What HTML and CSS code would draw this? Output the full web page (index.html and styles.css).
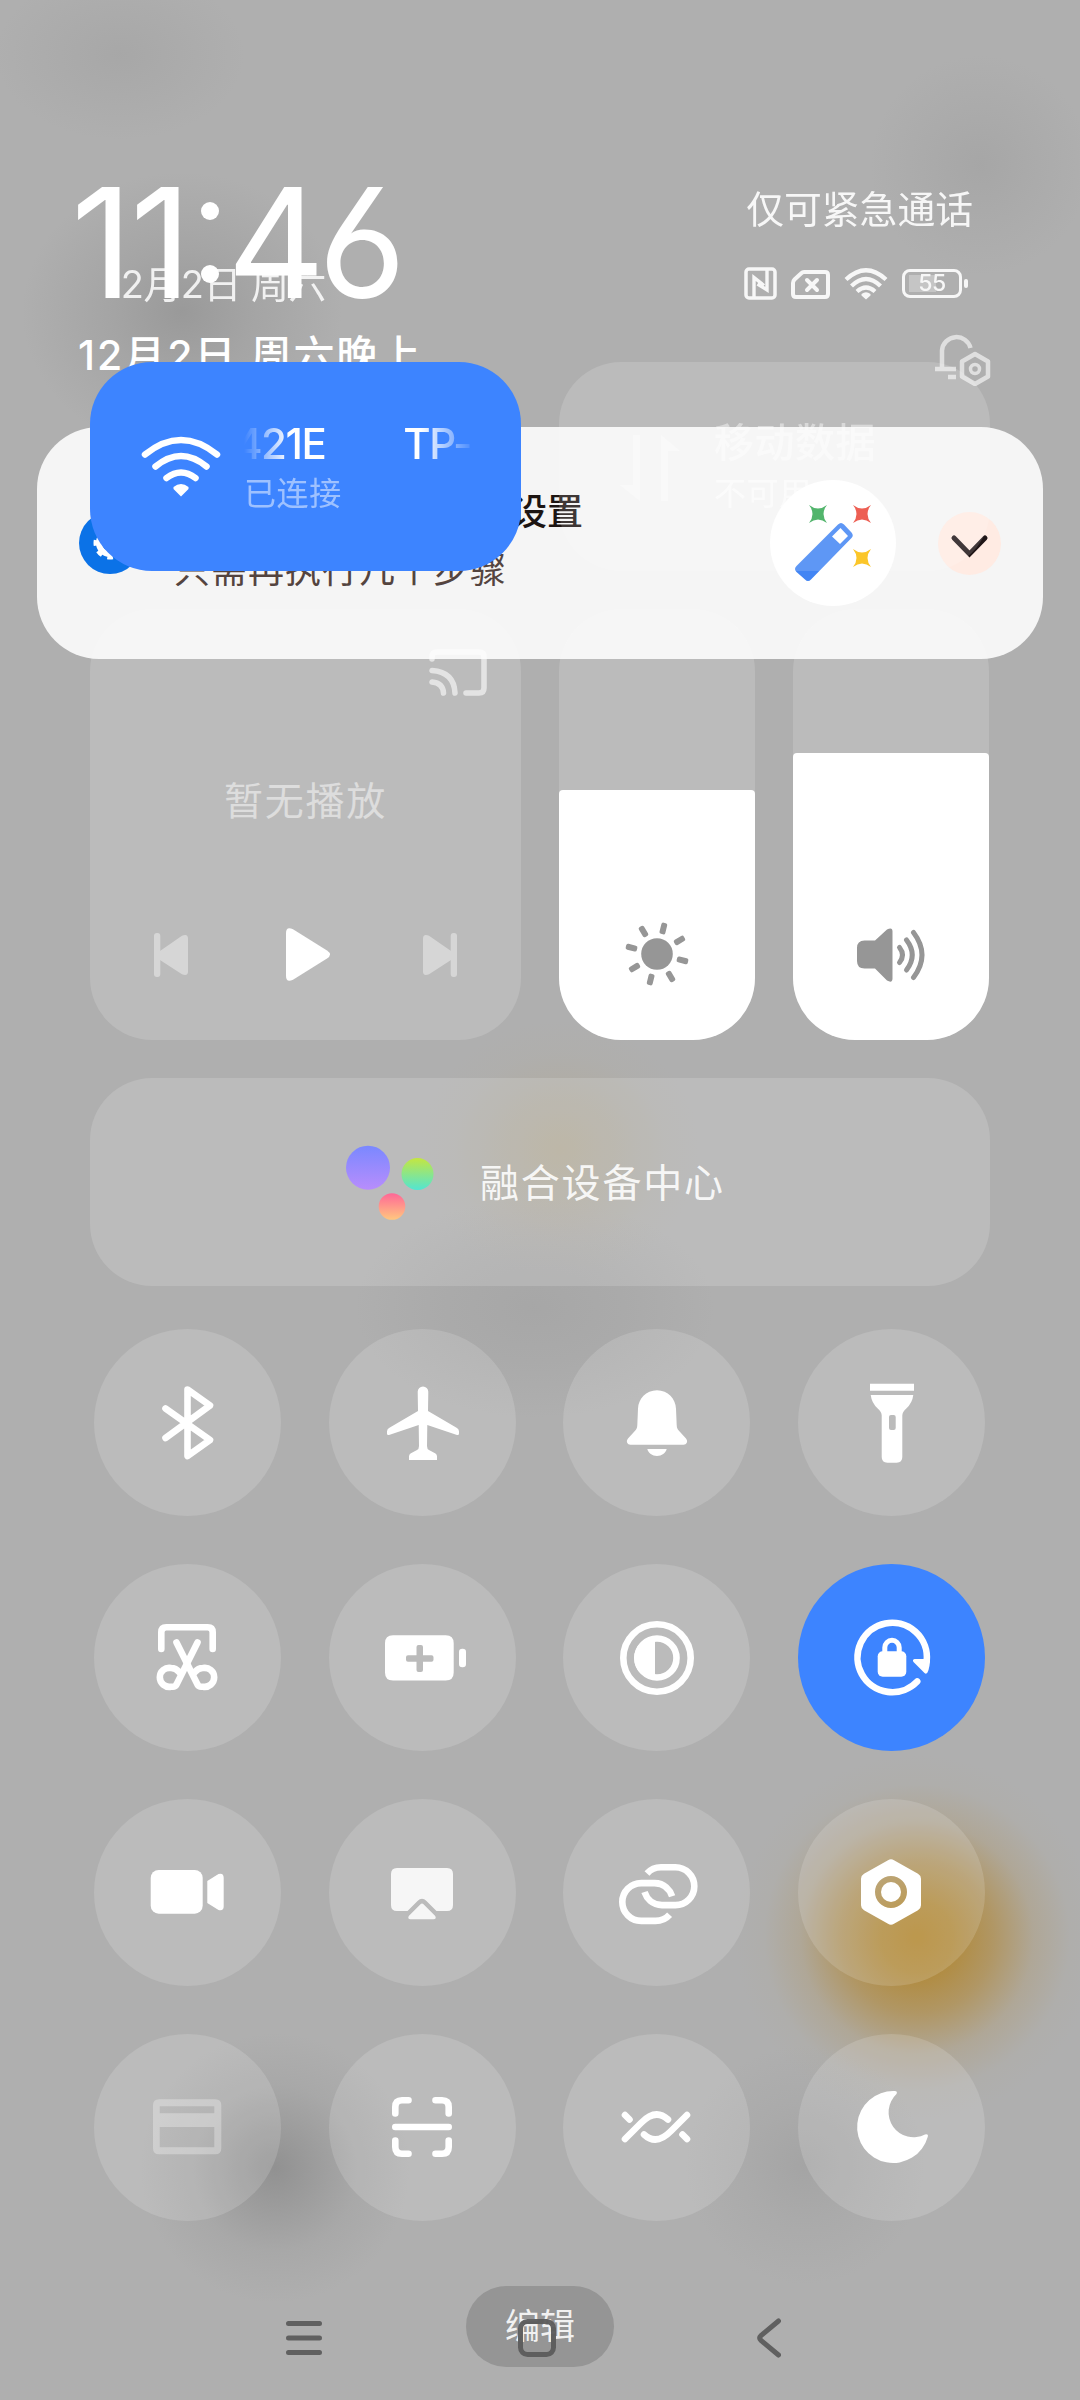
FILE: index.html
```html
<!DOCTYPE html>
<html lang="zh-CN">
<head>
<meta charset="utf-8">
<title>控制中心</title>
<link rel="stylesheet" href="styles.css">
</head>
<body>
<div class="screen">
  <section class="lock layer">
    <div class="clock"><span class="one">1</span><span class="one">1</span><span class="colon"><i></i><i></i></span><span class="four">4</span><span class="six">6</span></div>
    <div class="lock-date">12月2日 周六晚上</div>
    <article class="notice">
      <svg class="notice-app" viewBox="0 0 62 62"><circle cx="31" cy="31" r="31" fill="#0b72e7"/><circle cx="31" cy="31" r="11" fill="none" stroke="#fff" stroke-width="6"/><circle cx="31" cy="31" r="14" fill="none" stroke="#fff" stroke-width="5" stroke-dasharray="5.5 5.5" stroke-dashoffset="3"/></svg>
      <div class="notice-text"><strong>设置</strong><span>只需再执行几个步骤</span></div>
      <svg class="notice-wand" viewBox="0 0 126 126"><circle cx="63" cy="63" r="63" fill="#fff"/>
        <path d="M39 25q9 7 18 0q-7 9 0 18q-9-7-18 0q7-9 0-18z" fill="#34a853"/>
        <path d="M83 25q9 7 18 0q-7 9 0 18q-9-7-18 0q7-9 0-18z" fill="#ea4335"/>
        <path d="M83 69q9 7 18 0q-7 9 0 18q-9-7-18 0q7-9 0-18z" fill="#fbbc04"/>
        <path d="M68 44.500q3-3 6 0l7.500 8q2.500 3 0 5.500L41 99.500q-3 3-6 0L26.500 92q-3-3 0-6z" fill="#4285f4"/>
        <path d="M70.500 48l7.500 8-8 8-8-7.500z" fill="#fff"/></svg>
      <svg class="notice-more" viewBox="0 0 63 63"><circle cx="31.500" cy="31.500" r="31.500" fill="#ffebe3"/><path d="M16 26l15.500 16L47 26" fill="none" stroke="#1f1517" stroke-width="5" stroke-linecap="round"/></svg>
    </article>
  </section>

  <section class="panel layer">
    <header class="head">
      <div class="head-date">12月2日 周六</div>
      <div class="head-right">
        <div class="carrier">仅可紧急通话</div>
        <div class="status">
          <svg width="33" height="33" viewBox="0 0 33 33" fill="none" stroke="#fff"><rect x="2" y="2" width="29" height="29" rx="3" stroke-width="3.500"/><path d="M10 30V10.500l10 8M23 3v20L13.500 17" stroke-width="3.400"/></svg>
          <svg width="39" height="33" viewBox="0 0 39 33"><path d="M13 5h21q3 0 3 3v19q0 3-3 3H5q-3 0-3-3V16q0-2 1.500-3.500L10 6.500Q11.500 5 13 5z" fill="none" stroke="#fff" stroke-width="4"/><path d="M16 13l10 10M26 13L16 23" stroke="#fff" stroke-width="4" stroke-linecap="round"/></svg>
          <svg width="44" height="33" viewBox="0 0 44 33"><g fill="none" stroke="#fff" stroke-width="4.300"><path d="M2 12.500Q22-6 42 12.500"/><path d="M7.500 19Q22 5 36.500 19"/><path d="M13 24.500q9-8 18 0"/></g><path d="M17.500 27q4.500-3.500 9 0v1.500L22 32.500l-4.500-4z" fill="#fff"/></svg>
          <div class="battery"><span>55</span></div>
        </div>
        <svg class="bell" width="58" height="54" viewBox="0 0 58 54" fill="none" stroke="#fff" stroke-width="4.500"><path d="M9 37V18.500A14.500 14.500 0 0 1 37.500 16M2 37h21M15 45h8"/><path d="M42 22l13 7.500v15L42 52l-13-7.500v-15z" stroke-linejoin="round"/><circle cx="42" cy="37" r="4.500" stroke-width="3.500"/></svg>
      </div>
    </header>

    <div class="pair">
      <div class="card card-on">
        <svg class="card-icon" width="80" height="62" viewBox="0 0 80 62"><g fill="none" stroke="#fff" stroke-width="6.500" stroke-linecap="round"><path d="M4 18.500Q40-10.500 76 18.500"/><path d="M14.500 30.500Q40 9.500 65.500 30.500"/><path d="M25.500 42Q40 31 54.500 42"/></g><path d="M32.500 51q7.500-6 15 0v2L40 60.500 32.500 53z" fill="#fff"/></svg>
        <div class="card-text"><div class="ssid"><span>421E</span><span>TP-</span></div><div class="sub">已连接</div></div>
      </div>
      <div class="card card-off">
        <svg class="card-icon" width="60" height="68" viewBox="0 0 60 68" fill="#fff"><path d="M13 1h7v66L0 51h13zM41 67h7V17h12L41 1z"/></svg>
        <div class="card-text"><div class="name">移动数据</div><div class="sub">不可用</div></div>
      </div>
    </div>

    <div class="pair">
      <div class="media">
        <svg class="cast" width="58" height="47" viewBox="0 0 58 47" fill="none" stroke="#fff" stroke-width="5.500" stroke-linecap="round"><path d="M3 10V8q0-5 5-5h42q5 0 5 5v31q0 5-5 5H37M3 21.500Q25 23 26 44M3 33q11 1 11.500 11"/></svg>
        <div class="media-empty">暂无播放</div>
        <div class="media-keys">
          <svg class="dim" width="34" height="44" viewBox="0 0 34 44" fill="#fff"><rect width="6.300" height="44" rx="3"/><path d="M6 18L28 2.700q6-2.500 6 3v32.600q0 5.500-6 3L6 27z"/></svg>
          <svg class="play" width="44" height="53" viewBox="0 0 44 53" fill="#fff"><path d="M0 5Q0-2 7 1.200L41 22.500q6 4 0 8L7 51.800Q0 55 0 48z"/></svg>
          <svg class="dim" width="34" height="44" viewBox="0 0 34 44" fill="#fff"><rect x="27.700" width="6.300" height="44" rx="3"/><path d="M28 18L6 2.700q-6-2.500-6 3v32.600q0 5.500 6 3L28 27z"/></svg>
        </div>
      </div>
      <div class="slider"><div class="fill fill-light">
        <svg width="66" height="66" viewBox="-33 -33 66 66" fill="#969696"><circle r="15.800"/><rect x="-3" y="-32" width="6" height="11.500" rx="2" transform="rotate(14)"/><rect x="-3" y="-32" width="6" height="11.500" rx="2" transform="rotate(59)"/><rect x="-3" y="-32" width="6" height="11.500" rx="2" transform="rotate(104)"/><rect x="-3" y="-32" width="6" height="11.500" rx="2" transform="rotate(149)"/><rect x="-3" y="-32" width="6" height="11.500" rx="2" transform="rotate(194)"/><rect x="-3" y="-32" width="6" height="11.500" rx="2" transform="rotate(239)"/><rect x="-3" y="-32" width="6" height="11.500" rx="2" transform="rotate(284)"/><rect x="-3" y="-32" width="6" height="11.500" rx="2" transform="rotate(329)"/></svg>
      </div></div>
      <div class="slider"><div class="fill fill-sound">
        <svg width="70" height="54" viewBox="0 0 70 54"><path d="M8.500 12.500H19L31 1.500q5.500-3 5.500 2v47q0 5-5.500 2L19 40.500H8.500Q1 40.500 1 33V20q0-7.500 7.500-7.500z" fill="#969696"/><g fill="none" stroke="#969696" stroke-width="5" stroke-linecap="round"><path d="M43.500 19.500q6 7.500 0 15"/><path d="M50.500 12q11.500 15 0 30"/><path d="M57.500 4.500q17 22.500 0 45"/></g></svg>
      </div></div>
    </div>

    <div class="hub">
      <svg width="88" height="75" viewBox="0 0 88 75"><defs><linearGradient id="a" x2="0" y2="1"><stop stop-color="#7a88ff"/><stop offset="1" stop-color="#b88dfc"/></linearGradient><linearGradient id="b" x2="0" y2="1"><stop stop-color="#c5e640"/><stop offset="1" stop-color="#52e5d2"/></linearGradient><linearGradient id="c" x2="0" y2="1"><stop stop-color="#ff6797"/><stop offset="1" stop-color="#ffc77f"/></linearGradient></defs><circle cx="22" cy="22.700" r="22" fill="url(#a)"/><circle cx="71.500" cy="29" r="16" fill="url(#b)"/><circle cx="46" cy="61.500" r="13.300" fill="url(#c)"/></svg>
      <span>融合设备中心</span>
    </div>

    <div class="toggles">
      <div class="toggle"><svg viewBox="0 0 187 187"><path class="line" d="M71.500 79.500L116 111 93.500 127V60.500L116 76.500 71.500 109"/></svg></div>
      <div class="toggle"><svg viewBox="0 0 187 187"><path d="M94 57.500a5.300 5.300 0 0 1 5.300 5.300L99 82l29 17q2 1.300 2 3.500v2q0 2-2 1.500L98.300 96 98 117q0 3 2 4l6.500 3.500q1.500 1 1.500 3v3.500H80v-3.500q0-2 1.500-3l6.500-3.500q2-1 2-4L89.700 96 60 106q-2 .5-2-1.500v-2q0-2.200 2-3.500L89 82l-.3-19.200A5.300 5.300 0 0 1 94 57.500z"/></svg></div>
      <div class="toggle"><svg viewBox="0 0 187 187"><path d="M94 61.300c-11 0-18.700 8.500-19 18.500L74.300 96c-.1 3-.8 4-2 5.400L65 109.500c-2.500 3-.5 6.200 2.500 6.200h53c3 0 5-3.200 2.500-6.200l-7.300-8.100c-1.200-1.400-1.900-2.400-2-5.400L113 79.800c-.3-10-8-18.500-19-18.500zM84.300 120h19.400c-1 4-5 7-9.700 7s-8.700-3-9.700-7z"/></svg></div>
      <div class="toggle"><svg viewBox="0 0 187 187"><path d="M72 54.700h44v7H72z"/><path fill-rule="evenodd" d="M72.700 66h42.600q-1 8-7 13.500-4 3.500-4 7V128q0 5.700-5.700 5.700h-9.200q-5.700 0-5.700-5.700V86.500q0-3.500-4-7Q73.700 74 72.700 66zM93 86q-2 0-2 2v11q0 2 2 2h2.700q2 0 2-2V88q0-2-2-2z"/></svg></div>

      <div class="toggle"><svg viewBox="0 0 187 187"><g class="line"><path d="M67.300 85V68.300q0-5 5-5h41.400q5 0 5 5V85"/><path d="M103.500 78.500l-21 42q-1.300 2.200-3.500 2.200h-2A9.500 9.500 0 1 1 77 104q5 0 8 4"/><path d="M82.500 78.500l21 42q1.300 2.200 3.500 2.200h2a9.500 9.500 0 1 0 0-18.700q-5 0-8 4"/></g></svg></div>
      <div class="toggle"><svg viewBox="0 0 187 187"><path fill-rule="evenodd" d="M64 71.300h52.700q8 0 8 8v29.200q0 8-8 8H64q-8 0-8-8V79.300q0-8 8-8zM87.500 83v8.200H79q-2 0-2 2v2.500q0 2 2 2h8.500v8.300q0 2 2 2H92q2 0 2-2v-8.300h8.500q2 0 2-2v-2.500q0-2-2-2H94V83q0-2-2-2h-2.500q-2 0-2 2z"/><rect x="130" y="84.700" width="7" height="18.600" rx="3.300"/></svg></div>
      <div class="toggle"><svg viewBox="0 0 187 187"><circle class="line" cx="94" cy="94" r="33.700"/><circle class="line" cx="94" cy="94" r="19.500"/><path d="M92 73v42a21 21 0 0 1 0-42z"/></svg></div>
      <div class="toggle toggle-on"><svg viewBox="0 0 187 187"><path class="line" d="M119.200 117.500A34.700 34.700 0 1 1 128.700 97"/><path d="M116.500 95H132q0 8-2.500 13.500-1.200 2-3 .5L115.500 98q-1.500-2.500 1-3z"/><rect x="79.700" y="87.300" width="28.600" height="25.400" rx="5"/><path class="line shackle" d="M86.800 88v-4.500a7.200 7.200 0 0 1 14.400 0V88"/></svg></div>

      <div class="toggle"><svg viewBox="0 0 187 187"><rect x="56.700" y="71" width="52" height="43.700" rx="8"/><path d="M113.300 82l11.200-7q5.200-1.500 5.200 4v28q0 5.500-5.200 4l-11.200-7z"/></svg></div>
      <div class="toggle"><svg viewBox="0 0 187 187" opacity=".88"><path d="M68 69h50q6 0 6 6v31q0 6-6 6h-10.500L97.500 102q-4.500-4.500-9 0L78.500 112H68q-6 0-6-6V75q0-6 6-6zM91.500 105.200q1.500-1.200 3 0l11.500 11.500q2 3-1.500 3.600h-23q-3.500-.6-1.500-3.600z"/></svg></div>
      <div class="toggle"><svg viewBox="0 0 187 187"><g class="line flat"><path d="M84 74.500q5.500-6.200 14-6.200h14.400a18.900 18.900 0 0 1 0 37.800H99C89 106 83.500 99 81.500 93"/><path d="M84 74.500q5.500-6.200 14-6.200h14.400a18.900 18.900 0 0 1 0 37.800H99C89 106 83.500 99 81.500 93" transform="rotate(180 95.300 95.100)"/></g></svg></div>
      <div class="toggle"><svg viewBox="0 0 187 187"><path fill-rule="evenodd" d="M90 61.300q3-2 6 0l24 13.500q3 1.800 3 5v26.400q0 3.200-3 5L96 124.700q-3 2-6 0l-24-13.500q-3-1.800-3-5V79.800q0-3.200 3-5zM93 77a16 16 0 1 0 0 32 16 16 0 0 0 0-32z"/><circle cx="93" cy="93" r="10"/></svg></div>

      <div class="toggle"><svg viewBox="0 0 187 187" opacity=".3"><path fill-rule="evenodd" d="M65 65.300h56.300q6 0 6 6v43q0 6-6 6H65q-6 0-6-6v-43q0-6 6-6zM65.700 72.300v7h54.600v-7zM65.700 93v20.300h54.600V93z"/></svg></div>
      <div class="toggle"><svg viewBox="0 0 187 187"><path class="line" d="M66.300 79.500V73q0-6.700 6.700-6.700h6.500M106.500 66.300h6.500q6.700 0 6.700 6.700v6.500M119.700 106.500v6.500q0 6.700-6.700 6.700h-6.500M79.500 119.700H73q-6.700 0-6.700-6.700v-6.500M66.300 93h53.400"/></svg></div>
      <div class="toggle"><svg viewBox="0 0 187 187"><g class="line"><path d="M62 105l16-16Q92.500 74 105 85.500M124 81l-16 16Q93.500 112 81 100.500M62 81l4.500 4.500M124 105l-4.500-4.500"/></g></svg></div>
      <div class="toggle"><svg viewBox="0 0 187 187"><path d="M96 57q4-.3 2.500 3A25 25 0 0 0 127 100.500q3.500-.8 2.800 2.200A36 36 0 1 1 96 57z"/></svg></div>
    </div>

    <div class="edit">编辑</div>
  </section>

  <nav class="nav layer">
    <svg width="36" height="38" viewBox="0 0 36 38"><path d="M2.500 4.500h31M2.500 19h31M2.500 33.500h31"/></svg>
    <svg class="home" width="38" height="38" viewBox="0 0 38 38"><rect x="2.500" y="2.500" width="33" height="33" rx="7"/></svg>
    <svg width="24" height="40" viewBox="0 0 24 40"><path d="M21.500 3L4 17.500q-2.500 2.500 0 5L21.500 37"/></svg>
  </nav>
</div>
</body>
</html>
```
FILE: styles.css
```css
* { box-sizing: border-box; }
body { margin: 0; font-family: Inter, "Noto Sans CJK SC", sans-serif; color: #fff; }
svg { display: block; flex: none; }

.screen {
  position: relative;
  width: 1080px;
  height: 2400px;
  overflow: hidden;
  background:
    radial-gradient(circle 182px at 917px 1937px, rgba(177,134,46,1), rgba(177,135,50,.9) 20%, rgba(177,138,62,.66) 42%, rgba(176,150,100,.32) 64%, rgba(175,165,140,.1) 84%, rgba(175,175,175,0)),
    radial-gradient(ellipse 140px 130px at 560px 1150px, rgba(182,166,125,.45), rgba(180,166,135,.3) 40%, rgba(178,170,150,.1) 75%, rgba(175,175,175,0)),
    radial-gradient(circle 135px at 275px 2168px, rgba(125,125,125,.6), rgba(130,130,130,.46) 25%, rgba(135,135,135,.17) 62%, rgba(150,150,150,0)),
    radial-gradient(circle 120px at 805px 2165px, rgba(135,135,135,.27), rgba(140,140,140,.13) 50%, rgba(150,150,150,0)),
    radial-gradient(ellipse 180px 110px at 535px 1308px, rgba(140,140,140,.24), rgba(140,140,140,.14) 50%, rgba(150,150,150,0)),
    radial-gradient(ellipse 160px 140px at 182px 312px, rgba(130,130,130,.48), rgba(135,135,135,.26) 45%, rgba(150,150,150,0)),
    radial-gradient(circle 110px at 980px 165px, rgba(140,140,140,.25), rgba(140,140,140,.12) 50%, rgba(150,150,150,0)),
    radial-gradient(ellipse 125px 85px at 120px 55px, rgba(140,140,140,.22), rgba(140,140,140,.11) 50%, rgba(150,150,150,0)),
    #afafaf;
}
.layer { position: absolute; inset: 0; }

/* Lock screen */
.lock { padding: 167px 37px 0; }
.clock { display: flex; height: 152px; padding-left: 34px; font-size: 152px; line-height: 152px; font-weight: 400; font-feature-settings: "cv03"; }
.one { width: 59px; }
.colon { display: flex; flex-direction: column; gap: 45px; width: 38px; padding: 35px 0 0 12px; }
.colon i { width: 18px; height: 18px; border-radius: 50%; background: #fff; }
.four { width: 91px; }
.lock-date { height: 48px; margin: 12px 0 0 41px; font-size: 41px; line-height: 48px; font-weight: 500; letter-spacing: 2px; }
.notice { display: flex; align-items: center; height: 232px; margin-top: 48px; padding: 0 42px; border-radius: 62px; background: #f5f5f5; }
.notice-app { width: 62px; height: 62px; }
.notice-text { display: flex; flex-direction: column; flex: 1; gap: 12px; padding: 0 0 5px 33px; font-size: 36px; line-height: 46px; color: #54443f; white-space: nowrap; }
.notice-text strong { padding-left: 337px; font-weight: 500; color: #1d1512; }
.notice-text span { letter-spacing: 1px; }
.notice-wand { width: 126px; height: 126px; margin-right: 42px; }
.notice-more { width: 63px; height: 63px; }

/* Control panel */
.panel { display: flex; flex-direction: column; gap: 38px; padding: 184px 90px 0; }
.head { display: flex; justify-content: space-between; height: 140px; }
.head-date { padding: 76px 0 0 16px; font-size: 38px; line-height: 48px; opacity: .85; letter-spacing: -.6px; }
.head-right { display: flex; flex-direction: column; align-items: flex-end; }
.carrier { height: 50px; margin: 0 17px 0 0; font-size: 37.800px; line-height: 50px; opacity: .9; }
.status { display: flex; gap: 14px; margin: 33px 28px 0 0; opacity: .9; }
.battery { position: relative; width: 60px; height: 29px; margin: 2px 0; border: 3px solid #fff; border-radius: 8px; background: linear-gradient(rgba(255,255,255,.3), rgba(255,255,255,.3)) 4px 3px / 27px 17px no-repeat; text-align: center; }
.battery span { display: block; font-size: 23px; line-height: 23px; font-weight: 500; letter-spacing: -.5px; }
.battery::after { content: ""; position: absolute; right: -9px; top: 7px; width: 4px; height: 9px; border-radius: 2px; background: #fff; }
.bell { margin: 32px -1px 0 0; opacity: .6; }

.pair { display: flex; gap: 38px; }
.card { display: flex; width: 431px; height: 209px; border-radius: 62px; background: rgba(255,255,255,.15); }
.card-on { padding: 58px 50px 0 51px; background: #3d84ff; }
.card-on .card-icon { margin-top: 16px; }
.card-on .card-text { padding-left: 23px; width: 252px; }
.ssid { display: flex; justify-content: space-between; width: 227px; overflow: hidden; font-size: 42px; line-height: 48px; font-weight: 450; letter-spacing: -1.500px; white-space: nowrap; -webkit-mask-image: linear-gradient(90deg, transparent, #000 20%, #000 78%, transparent 102%); mask-image: linear-gradient(90deg, transparent, #000 20%, #000 78%, transparent 102%); }
.ssid span:first-child { margin-left: -9px; }
.sub { margin-top: 6px; font-size: 32px; line-height: 40px; letter-spacing: .6px; opacity: .5; }
.card-off { padding: 57px 0 0 61px; }
.card-off .card-icon { margin-top: 15px; opacity: .35; }
.card-off .card-text { padding-left: 34px; }
.name { font-size: 40px; line-height: 48px; font-weight: 500; letter-spacing: .5px; opacity: .45; }
.card-off .sub { margin-top: 7px; opacity: .6; }

.media { display: flex; flex-direction: column; width: 431px; height: 431px; border-radius: 62px; background: rgba(255,255,255,.15); }
.cast { align-self: flex-end; margin: 40px 34px 0 0; opacity: .6; }
.media-empty { margin-top: 79px; text-align: center; font-size: 39px; line-height: 52px; letter-spacing: 1.800px; color: rgba(255,255,255,.5); }
.media-keys { display: flex; justify-content: space-between; align-items: center; margin-top: 101px; padding: 0 64px; }
.play { margin: 0 -5px 0 0; }
.dim { opacity: .4; }
.slider { display: flex; align-items: flex-end; width: 196px; height: 431px; border-radius: 62px; background: rgba(255,255,255,.15); overflow: hidden; }
.fill { display: flex; flex-direction: column; justify-content: flex-end; align-items: center; width: 100%; border-radius: 4px 4px 0 0; background: #fff; }
.fill-light { height: 250px; padding-bottom: 53px; }
.fill-sound { height: 287px; padding-bottom: 58px; }

.hub { display: flex; align-items: center; gap: 46px; height: 208px; padding-left: 256px; border-radius: 62px; background: rgba(255,255,255,.15); font-size: 39px; letter-spacing: 1.800px; color: rgba(255,255,255,.9); }
.hub span { padding-bottom: 5px; }

.toggles { display: grid; grid-template-columns: repeat(4, 187px); gap: 48px 47.600px; margin: 5px 0 0 4px; }
.toggle { height: 187px; border-radius: 50%; background: rgba(255,255,255,.15); }
.toggle svg { width: 187px; height: 187px; fill: #fff; }
.toggle-on { background: #3d84ff; }
.toggle .line { fill: none; stroke: #fff; stroke-width: 6.600px; stroke-linecap: round; stroke-linejoin: round; }
.toggle .flat { stroke-linecap: butt; }
.toggle .shackle { stroke-width: 5px; }

.edit { align-self: center; width: 148px; height: 81px; margin-top: 27px; border-radius: 41px; background: #959595; color: rgba(255,255,255,.88); font-size: 35px; line-height: 81px; text-align: center; }

/* Navigation bar */
.nav { display: flex; justify-content: space-between; align-items: center; top: 2318px; bottom: auto; height: 40px; padding: 0 299px 0 286px; fill: none; stroke: #5c5c5c; stroke-width: 5px; stroke-linecap: round; opacity: .95; }
.home { margin-right: 5px; }
```
